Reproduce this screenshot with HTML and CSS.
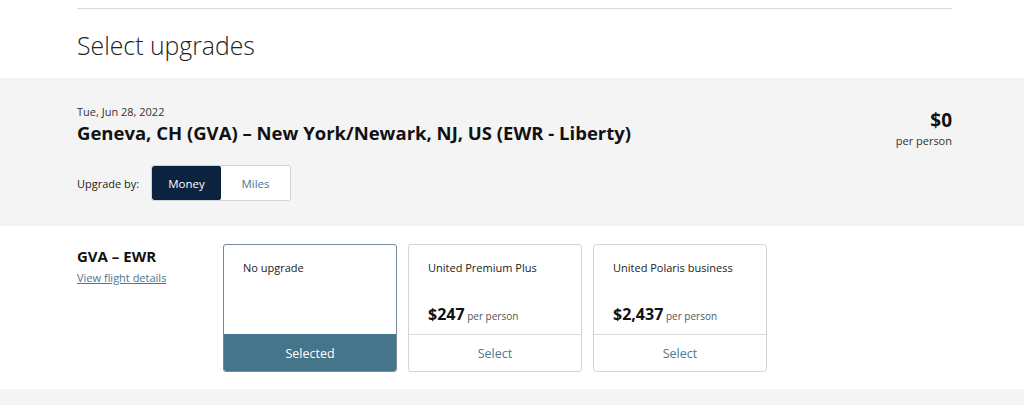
FILE: index.html
```html
<!DOCTYPE html>
<html lang="en">
<head>
<meta charset="utf-8">
<title>Select upgrades</title>
<link rel="stylesheet" href="styles.css">
</head>
<body>
<div class="wrap top">
  <hr class="rule">
  <h1 class="title">Select upgrades</h1>
</div>
<section class="band grey">
  <div class="wrap trip">
    <div class="trip-info">
      <div class="date">Tue, Jun 28, 2022</div>
      <h2 class="route">Geneva, CH (GVA) – New York/Newark, NJ, US (EWR - Liberty)</h2>
      <div class="upgrade-by">
        <span class="label">Upgrade by:</span>
        <div class="toggle">
          <button class="tbtn active">Money</button>
          <button class="tbtn">Miles</button>
        </div>
      </div>
    </div>
    <div class="total">
      <div class="amount">$0</div>
      <div class="per">per person</div>
    </div>
  </div>
</section>
<section class="band white">
  <div class="wrap segment">
    <div class="seg-info">
      <div class="seg-title">GVA – EWR</div>
      <a class="details" href="#">View flight details</a>
    </div>
    <div class="cards">
      <div class="card selected">
        <div class="card-body">
          <div class="cabin">No upgrade</div>
        </div>
        <div class="card-action">Selected</div>
      </div>
      <div class="card">
        <div class="card-body">
          <div class="cabin">United Premium Plus</div>
          <div class="price"><strong>$247</strong> <span>per person</span></div>
        </div>
        <div class="card-action">Select</div>
      </div>
      <div class="card">
        <div class="card-body">
          <div class="cabin">United Polaris business</div>
          <div class="price"><strong>$2,437</strong> <span>per person</span></div>
        </div>
        <div class="card-action">Select</div>
      </div>
    </div>
  </div>
</section>
<div class="band grey tail"></div>
</body>
</html>
```
FILE: styles.css
```css
* { box-sizing: border-box; }
html, body { margin: 0; padding: 0; }
body {
  font-family: "Open Sans", "Liberation Sans", Arial, sans-serif;
  color: #111;
  background: #fff;
  width: 1024px;
  overflow: hidden;
}
.wrap {
  width: 875px;
  margin-left: 77px;
}
.top {
  padding-top: 8px;
  height: 78px;
}
.rule {
  margin: 0;
  border: 0;
  border-top: 1px solid #d9d9d9;
}
.title {
  margin: 0;
  padding-top: 20px;
  font-size: 24.8px;
  font-weight: 300;
  line-height: 32px;
  color: #222;
}
.band.grey { background: #f4f4f4; }
.band.white { background: #fff; }
.trip {
  display: flex;
  justify-content: space-between;
  align-items: flex-start;
  height: 148px;
  padding-top: 26px;
}
.date {
  font-size: 11px;
  line-height: 16px;
  color: #333;
}
.route {
  margin: 0;
  font-size: 18.5px;
  font-weight: 700;
  line-height: 26px;
  color: #111;
}
.upgrade-by {
  display: flex;
  align-items: center;
  margin-top: 19px;
}
.label {
  font-size: 11px;
  color: #222;
  width: 74px;
}
.toggle {
  display: flex;
  height: 36px;
  border: 1px solid #d2d2d2;
  border-radius: 3px;
  background: #fff;
  overflow: hidden;
}
.tbtn {
  width: 69px;
  border: 0;
  background: #fff;
  font-family: inherit;
  font-size: 11.5px;
  color: #4c7690;
  padding: 0;
  cursor: pointer;
}
.tbtn.active {
  background: #0c2340;
  color: #fff;
  font-weight: 400;
  border-radius: 2px;
}
.total {
  text-align: right;
  padding-top: 4px;
}
.amount {
  font-size: 19px;
  font-weight: 700;
  line-height: 24px;
}
.per {
  font-size: 11px;
  line-height: 16px;
  color: #333;
  margin-top: 1px;
}
.segment {
  display: flex;
  height: 163px;
  padding-top: 18px;
}
.seg-info { width: 146px; }
.seg-title {
  font-size: 15px;
  font-weight: 700;
  line-height: 22px;
  padding-top: 1px;
}
.details {
  display: block;
  margin-top: 3px;
  font-size: 11px;
  color: #4b7790;
  text-decoration: underline;
  line-height: 16px;
}
.cards {
  display: flex;
  gap: 11px;
}
.card {
  width: 174px;
  height: 128px;
  border: 1px solid #d4d4d4;
  border-radius: 3px;
  display: flex;
  flex-direction: column;
  background: #fff;
  overflow: hidden;
}
.card.selected { border-color: #75899a; }
.card-body {
  flex: 1;
  padding: 15px 19px 0;
  display: flex;
  flex-direction: column;
  justify-content: space-between;
}
.cabin {
  font-size: 11px;
  line-height: 16px;
  color: #222;
}
.price {
  padding-bottom: 9px;
  font-size: 10px;
  color: #555;
}
.price strong {
  font-size: 16px;
  font-weight: 700;
  color: #111;
}
.card-action {
  height: 37px;
  border-top: 1px solid #dcdcdc;
  display: flex;
  align-items: center;
  justify-content: center;
  font-size: 12.5px;
  color: #4b7790;
}
.card.selected .card-action {
  background: #46758b;
  color: #fff;
  border-top-color: #46758b;
}
.tail { height: 16px; }
```
